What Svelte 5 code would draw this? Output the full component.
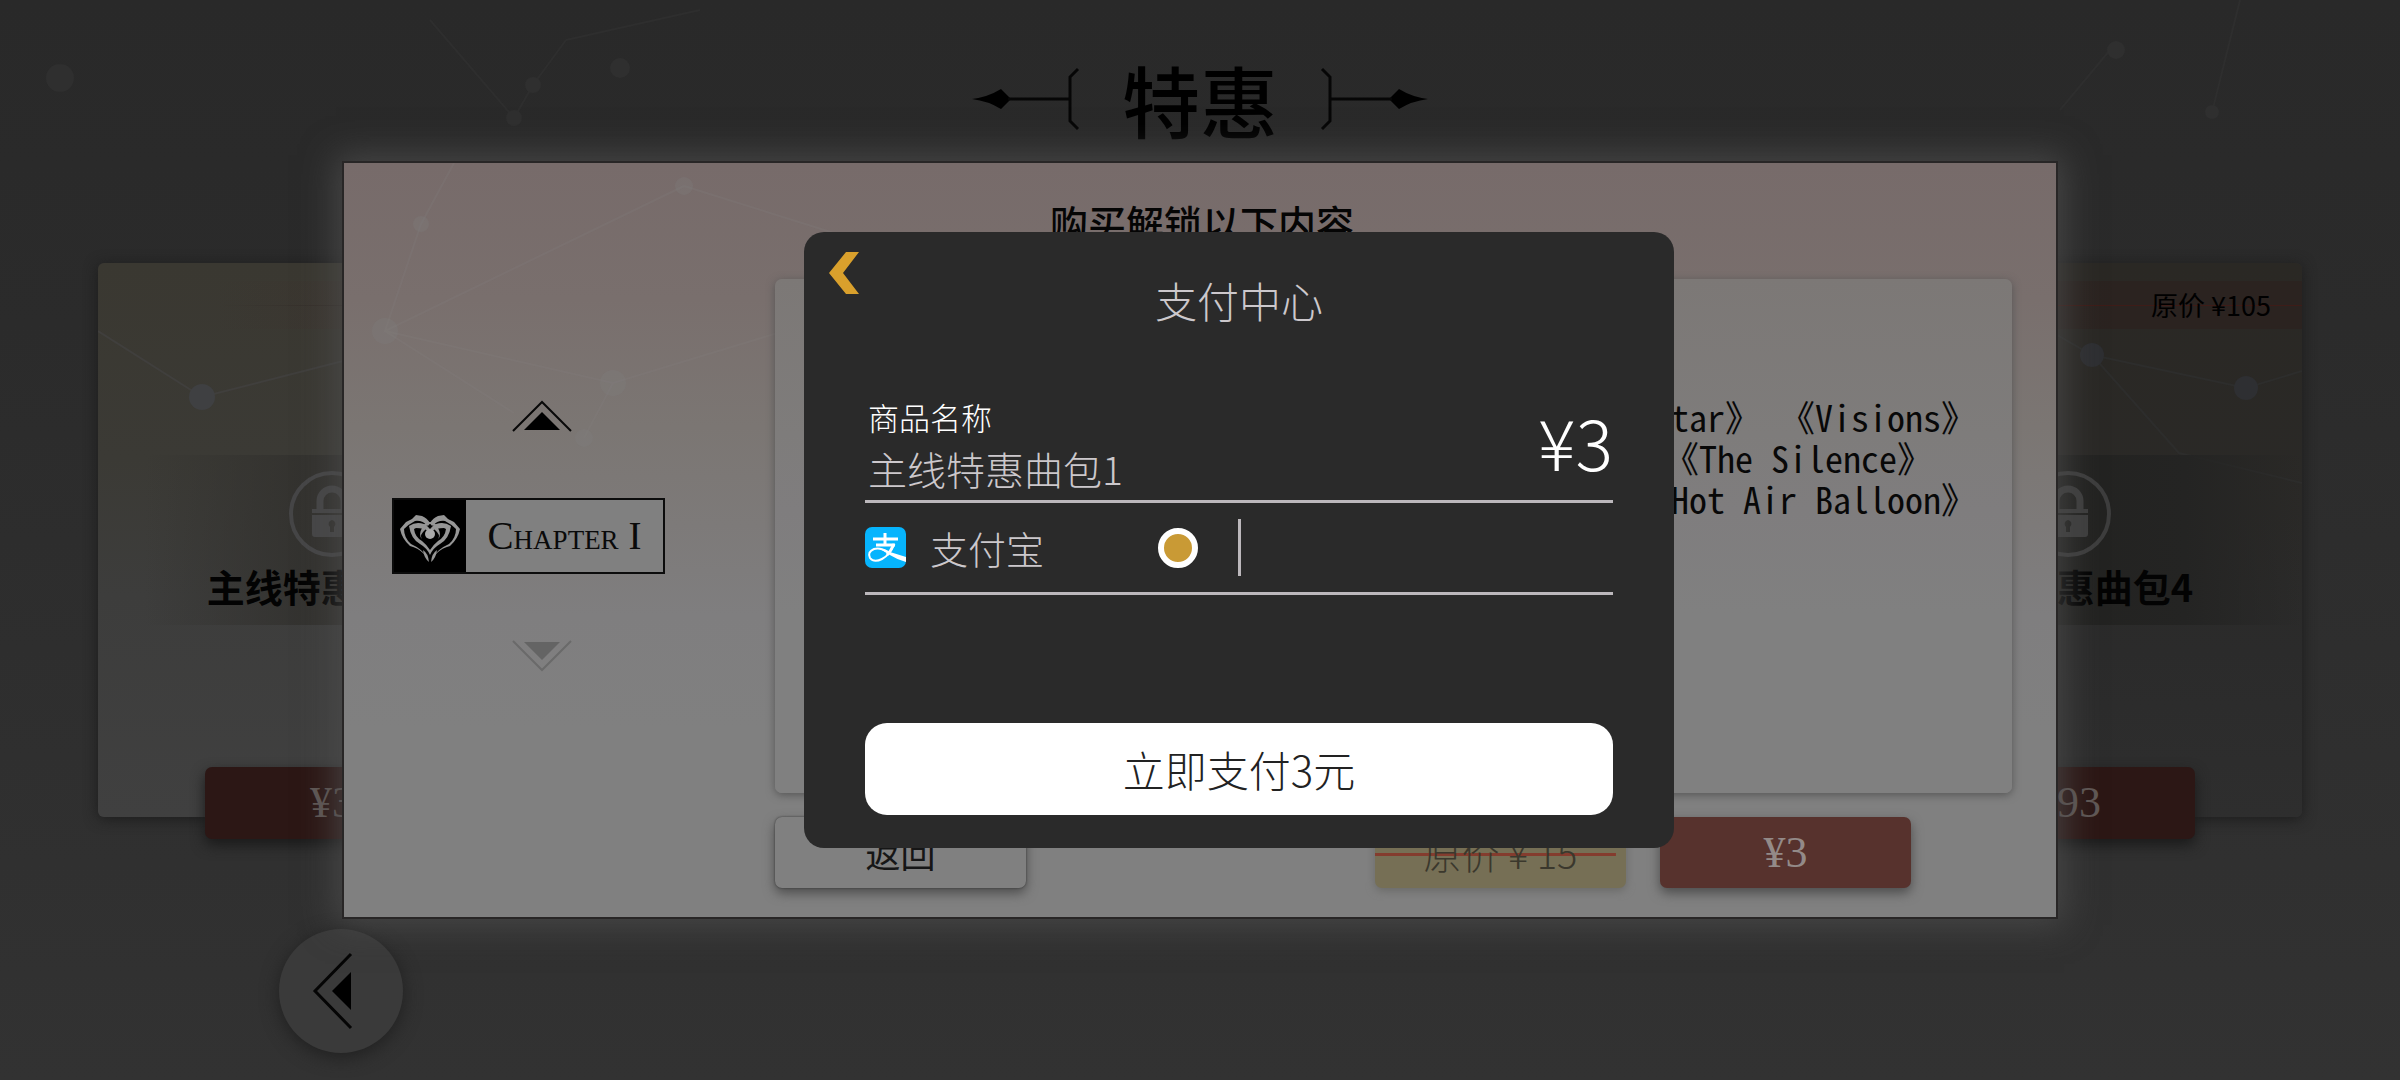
<script>
  const packs = [
    { name: '主线特惠曲包1', price: '¥3', original: '', tone: 'near' },
    { name: '主线特惠曲包4', price: '¥93', original: '原价 ¥105', tone: 'far' }
  ];

  const songs = [
    { title: '《Star》 《Visions》', inset: false },
    { title: '《The Silence》', inset: true },
    { title: '《Hot Air Balloon》', inset: false }
  ];
</script>

{#snippet ornament()}
  <svg class="ornament" viewBox="0 0 108 64" aria-hidden="true">
    <path d="M0 32Q16 30 29 22L39 32 29 42Q16 34 0 32Z" fill="#000" />
    <path d="M36 32H98M106 2 98 10V54L106 62" fill="none" stroke="#060606" stroke-width="3" />
  </svg>
{/snippet}

<main class="shop">
  <svg class="stars" viewBox="0 0 2400 1080" preserveAspectRatio="none" aria-hidden="true">
    <g stroke="#2e2e2e" stroke-width="2" fill="none">
      <path d="M566 40 533 85 514 118 430 20M566 40 700 10M2110 50 2060 110M2240 0 2212 112" />
    </g>
    <g fill="#2f2f2f">
      <circle cx="533" cy="85" r="8" /><circle cx="620" cy="68" r="10" /><circle cx="60" cy="78" r="14" />
      <circle cx="514" cy="118" r="8" /><circle cx="2116" cy="50" r="9" /><circle cx="2212" cy="112" r="7" />
    </g>
  </svg>

  <header class="heading">
    {@render ornament()}
    <h1>特惠</h1>
    <span class="mirrored">{@render ornament()}</span>
  </header>

  <section class="packs">
    {#each packs as pack}
      <article class="pack {pack.tone}">
        <svg class="pack-lines" viewBox="0 0 468 554" aria-hidden="true">
          {#if pack.tone === 'near'}
            <path d="M0 68 104 134 245 98 468 40" /><circle cx="104" cy="134" r="13" />
          {:else}
            <path d="M150 30 258 92 412 125 468 108M258 92 345 190 468 220" /><circle cx="258" cy="92" r="12" /><circle cx="412" cy="125" r="12" />
          {/if}
        </svg>
        <div class="ribbon"><s>{pack.original}</s></div>
        <div class="band">
          <svg class="lock" viewBox="0 0 86 86" aria-hidden="true">
            <circle cx="43" cy="43" r="41" fill="none" stroke="currentColor" stroke-width="4" />
            <path d="M31 38V30a12 12 0 0 1 24 0v8" fill="none" stroke="currentColor" stroke-width="7" />
            <path d="M23 38H63V42H23ZM23 44H63V63q0 3-3 3H26q-3 0-3-3ZM43 49a4 4 0 0 0-2 7v5h4v-5a4 4 0 0 0-2-7Z" fill="currentColor" fill-rule="evenodd" />
          </svg>
          <h2>{pack.name}</h2>
        </div>
        <button class="price">{pack.price}</button>
      </article>
    {/each}
  </section>

  <footer>
    <button class="round" aria-label="返回上一页">
      <svg viewBox="0 0 124 124" aria-hidden="true">
        <path d="M72 25 36 62 72 99" fill="none" stroke="#050505" stroke-width="3" />
        <path d="M72 43 53 62 72 81Z" fill="#000" />
      </svg>
    </button>
  </footer>
</main>

<div class="layer">
  <section class="dialog" aria-labelledby="unlock-title">
    <svg class="dialog-lines" viewBox="0 0 600 300" aria-hidden="true">
      <path d="M340 23 41 168 77 61 110 0M41 168 77 61M41 168 269 220 440 168M41 168 170 250M340 23 490 70M269 220 240 275" />
      <circle cx="340" cy="23" r="9" /><circle cx="77" cy="61" r="8" /><circle cx="41" cy="168" r="13" /><circle cx="269" cy="220" r="13" /><circle cx="240" cy="275" r="9" />
    </svg>
    <h2 id="unlock-title">购买解锁以下内容</h2>
    <div class="columns">
      <nav class="chapters">
        <button class="step" aria-label="上一章">
          <svg viewBox="0 0 60 32" aria-hidden="true"><path d="M1 31 30 2 59 31" fill="none" stroke="#080808" stroke-width="2" /><path d="M30 12 48 30H12Z" fill="#000" /></svg>
        </button>
        <button class="chapter">
          <svg viewBox="0 0 72 72" aria-hidden="true">
            <g fill="#969696" id="wing">
              <path d="M6 29 12 22 18 19 22 15 28 16Q33 18 36 23L34 26Q28 20 21 21 15 24 10 29 10 38 17 44 28 49 33 57L29 53Q24 48 16 46 8 39 6 29Z" />
              <path d="M15 26Q22 21 30 24 34 26 36 29L34 31Q30 28 22 28L20 29Q21 37 28 41 33 45 36 50V55Q33 48 26 44 17 39 15 26Z" />
              <path d="M28 28Q30 22 36 22V24Q31 25 31 30Q25 35 28 39 24 35 28 28Z" />
              <path d="M29 50Q34 53 35 62 30 58 29 50Z" />
            </g>
            <use href="#wing" transform="matrix(-1 0 0 1 72 0)" />
            <circle cx="36" cy="34" r="5" fill="#aaa" />
          </svg>
          <span>Chapter I</span>
        </button>
        <button class="step" aria-label="下一章" disabled>
          <svg viewBox="0 0 60 32" aria-hidden="true"><path d="M1 1 30 30 59 1" fill="none" stroke="#6a6a6a" stroke-width="2" /><path d="M30 20 48 2H12Z" fill="#646464" /></svg>
        </button>
      </nav>
      <div class="content">
        <ul class="songs">
          {#each songs as song}
            <li class:inset={song.inset}>{song.title}</li>
          {/each}
        </ul>
        <div class="actions">
          <button class="action back">返回</button>
          <span class="action original">原价 ¥ 15</span>
          <button class="action buy">¥3</button>
        </div>
      </div>
    </div>
  </section>
</div>

<div class="layer pay-layer">
  <form class="pay" onsubmit={(event) => event.preventDefault()}>
    <button type="button" class="close" aria-label="关闭">
      <svg viewBox="0 0 30 42" aria-hidden="true"><path d="M17 0H30L14 21 30 42H17L0 21Z" fill="#d9a02c" /></svg>
    </button>
    <h2>支付中心</h2>
    <div class="product">
      <div>
        <p class="label">商品名称</p>
        <p class="name">主线特惠曲包1</p>
      </div>
      <strong>¥3</strong>
    </div>
    <div class="method">
      <label for="alipay">
        <svg viewBox="0 0 41 41" aria-hidden="true">
          <rect width="41" height="41" rx="7" fill="#06b4fd" />
          <g fill="none" stroke="#fff">
            <path d="M8 12H33M20 6V18M11 18H30" stroke-width="3" />
            <path d="M29 17Q25 28 17 32 9 36 5 31 2 25 9 22 15 20 23 25" stroke-width="2" />
            <path d="M29 17Q26 24 22 28" stroke-width="3" />
          </g>
          <path d="M12 21Q18 21 25 25L41 30V35Q31 32 23 27 17 23 12 21Z" fill="#fff" />
        </svg>
        <span>支付宝</span>
      </label>
      <input id="alipay" type="radio" name="method" value="alipay" checked />
    </div>
    <button type="submit" class="submit">立即支付3元</button>
  </form>
</div>

<style>
  :global(body) {
    margin: 0;
    background: #2c2c2c;
    font-family: 'Noto Sans CJK SC', 'Noto Sans', sans-serif;
  }
  h1, h2, p, ul { margin: 0; padding: 0; font-weight: 500; }
  button { margin: 0; padding: 0; border: 0; background: none; font-family: inherit; cursor: pointer; }
  svg { display: block; }

  .shop {
    position: relative;
    box-sizing: border-box;
    min-height: 100vh;
    overflow: hidden;
    background: linear-gradient(#292929, #2b2b2b 30%, #2f2f2f 70%, #323232);
  }
  .stars { position: absolute; inset: 0; width: 100%; height: 100%; }

  .heading {
    position: relative;
    display: flex;
    justify-content: center;
    align-items: center;
    gap: 42px;
    height: 198px;
  }
  .heading h1 { font-size: 78px; line-height: 80px; color: #000; }
  .ornament { width: 108px; height: 64px; }
  .mirrored { transform: scaleX(-1); }

  .packs {
    position: relative;
    display: flex;
    justify-content: space-between;
    margin: 65px 98px 0;
  }
  .pack {
    position: relative;
    display: flex;
    flex-direction: column;
    align-items: center;
    box-sizing: border-box;
    width: 468px;
    height: 554px;
    padding-top: 18px;
    border-radius: 6px;
    box-shadow: 0 2px 14px #1c1c1c;
  }
  .near { background: linear-gradient(#3a3831, #3b3a35 35%, #3d3d3c 60%, #404040); color: #464647; }
  .far { background: linear-gradient(#2a2824, #2a2927 45%, #2b2b2b 70%, #2e2e2e); color: #3e3e3e; }
  .pack-lines { position: absolute; inset: 0; fill: #3f4042; stroke: #403f3d; stroke-width: 2; }
  .far .pack-lines { fill: #2e2f32; stroke: #2d2d2c; }
  .pack-lines path { fill: none; }
  .pack-lines circle { stroke: none; }
  .ribbon {
    position: relative;
    box-sizing: border-box;
    flex: none;
    align-self: stretch;
    height: 48px;
    padding-right: 31px;
    text-align: right;
    font-size: 27px;
    line-height: 48px;
    color: #000;
    background: linear-gradient(#3e1c18, #3e1c18) center / 100% 1px no-repeat, linear-gradient(90deg, #2b232000 20%, #2b2320 60%);
  }
  .near .ribbon { background: linear-gradient(90deg, #2c221f00 25%, #2c2220) center / 100% 1px no-repeat, linear-gradient(90deg, #3c322d00 25%, #3c322d); }
  .ribbon s { text-decoration: none; }
  .band {
    position: relative;
    display: flex;
    flex-direction: column;
    flex: none;
    align-items: center;
    align-self: stretch;
    gap: 2px;
    box-sizing: border-box;
    height: 170px;
    margin-top: 126px;
    padding-top: 16px;
    background: linear-gradient(90deg, #33322e00 10%, #32312e 50%, #33322e00);
  }
  .far .band { background: linear-gradient(90deg, #22222000, #222220 40%, #242423 75%, #24242300); }
  .lock { width: 86px; height: 86px; flex: none; }
  .band h2 { font-size: 38px; line-height: 54px; font-weight: 700; color: #030303; white-space: nowrap; }
  .price {
    width: 254px;
    height: 72px;
    margin-top: 142px;
    flex: none;
    border-radius: 7px;
    background: #2c1715;
    box-shadow: 0 6px 14px #1a1a1a;
    color: #605856;
    font: 44px/72px 'Liberation Serif', serif;
    position: relative;
  }

  footer { margin: 112px 0 0 279px; padding-bottom: 24px; position: relative; }
  .round {
    display: block;
    width: 124px;
    height: 124px;
    border-radius: 50%;
    background: #3a3a3a;
    box-shadow: 0 4px 18px #202020;
  }

  .layer {
    position: absolute;
    inset: 0;
    display: grid;
    place-items: center;
  }

  .dialog {
    position: relative;
    box-sizing: border-box;
    width: 72%;
    max-width: 1716px;
    min-height: 758px;
    padding: 32px 44px 26px 48px;
    border: 2px solid #282626;
    background: linear-gradient(#776b6a, #796f6d 18%, #7b7673 35%, #7d7a79 48%, #7f7e7f 60%, #808080 75%);
    box-shadow: 0 0 32px 6px #4d4d4dcc;
  }
  .dialog-lines {
    position: absolute;
    top: 0;
    left: 0;
    width: 600px;
    height: 300px;
    fill: #7f818144;
    stroke: #86807f38;
    stroke-width: 2;
  }
  .dialog-lines path { fill: none; }
  .dialog-lines circle { stroke: none; }
  .dialog h2 {
    position: relative;
    text-align: center;
    font-size: 38px;
    line-height: 54px;
    color: #050505;
  }
  .columns { position: relative; display: flex; margin-top: 30px; }
  .chapters { width: 383px; flex: none; padding-top: 121px; }
  .step { display: block; margin-left: 120px; }
  .step svg { width: 60px; height: 32px; }
  .chapter {
    display: flex;
    align-items: center;
    box-sizing: border-box;
    width: 273px;
    height: 76px;
    margin: 66px 0;
    border: 2px solid #0c0c0c;
    background: #808080;
    font: small-caps 39px/40px 'Liberation Serif', serif;
    color: #0a0a0a;
  }
  .chapter svg { width: 72px; height: 72px; flex: none; background: #000; }
  .chapter span { flex: 1; text-align: center; white-space: nowrap; }
  .content { flex: 1; }
  .songs {
    box-sizing: border-box;
    height: 514px;
    padding: 117px 35px 0 0;
    border-radius: 7px;
    background: linear-gradient(#7c7876, #7e7c7b 30%, #7f7d7e 45%, #808080 65%);
    box-shadow: 0 2px 8px #555;
    list-style: none;
    text-align: right;
    font-size: 36px;
    line-height: 41px;
    font-weight: 400;
    font-feature-settings: 'hwid';
    color: #080808;
  }
  .songs .inset { padding-right: 44px; }
  .actions { display: flex; gap: 34px; margin-top: 24px; padding-right: 101px; }
  .action {
    width: 251px;
    height: 71px;
    border-radius: 7px;
    box-shadow: 0 5px 12px #4c4c4c;
    text-align: center;
    font-size: 35px;
    line-height: 71px;
  }
  .back { margin-right: auto; background: #808080; color: #161616; box-shadow: 0 0 2px #333, 0 5px 12px #4c4c4c; }
  .original {
    color: #3b382d;
    font-size: 38px;
    font-weight: 300;
    background: linear-gradient(#843c2e, #843c2e) 0 36px / 96% 3px no-repeat, #766f55;
    box-shadow: 0 3px 8px #6a6a68;
  }
  .buy { background: #57322d; color: #938a88; font: 44px/71px 'Liberation Serif', serif; }

  .pay-layer { padding-left: 78px; }
  .pay {
    position: relative;
    box-sizing: border-box;
    width: 870px;
    max-width: 100%;
    padding: 38px 61px 33px;
    border-radius: 20px;
    background: #2a2a2a;
    color: #ccc8cc;
  }
  .close { position: absolute; left: 25px; top: 20px; }
  .close svg { width: 30px; height: 42px; }
  .pay h2 { text-align: center; font-size: 42px; line-height: 60px; font-weight: 300; }
  .product {
    display: flex;
    justify-content: space-between;
    align-items: flex-start;
    box-sizing: border-box;
    margin-top: 66px;
    padding-bottom: 2px;
    border-bottom: 3px solid #bcb8bc;
    font-weight: 300;
  }
  .product p { font-weight: 300; padding-left: 3px; }
  .label { font-size: 31px; line-height: 42px; color: #fff; }
  .name { font-size: 39px; line-height: 60px; }
  .product strong { font-size: 70px; line-height: 90px; font-weight: 300; color: #fff; }
  .method {
    display: grid;
    grid-template-columns: 1fr auto 50%;
    align-items: center;
    height: 89px;
    border-bottom: 3px solid #bcb8bc;
    background: linear-gradient(#bcb8bc, #bcb8bc) center / 3px 57px no-repeat;
  }
  .method label { display: flex; align-items: center; gap: 24px; font-size: 38px; line-height: 56px; font-weight: 300; }
  .method label svg { width: 41px; height: 41px; }
  .method input {
    appearance: none;
    box-sizing: border-box;
    width: 40px;
    height: 40px;
    margin: 0 41px 0 0;
    border: 6px solid #fff;
    border-radius: 50%;
    background: #c99a35;
  }
  .submit {
    display: block;
    width: 100%;
    height: 92px;
    margin-top: 128px;
    border-radius: 22px;
    background: #fff;
    font-size: 42px;
    line-height: 92px;
    font-weight: 300;
    color: #222;
  }
</style>
